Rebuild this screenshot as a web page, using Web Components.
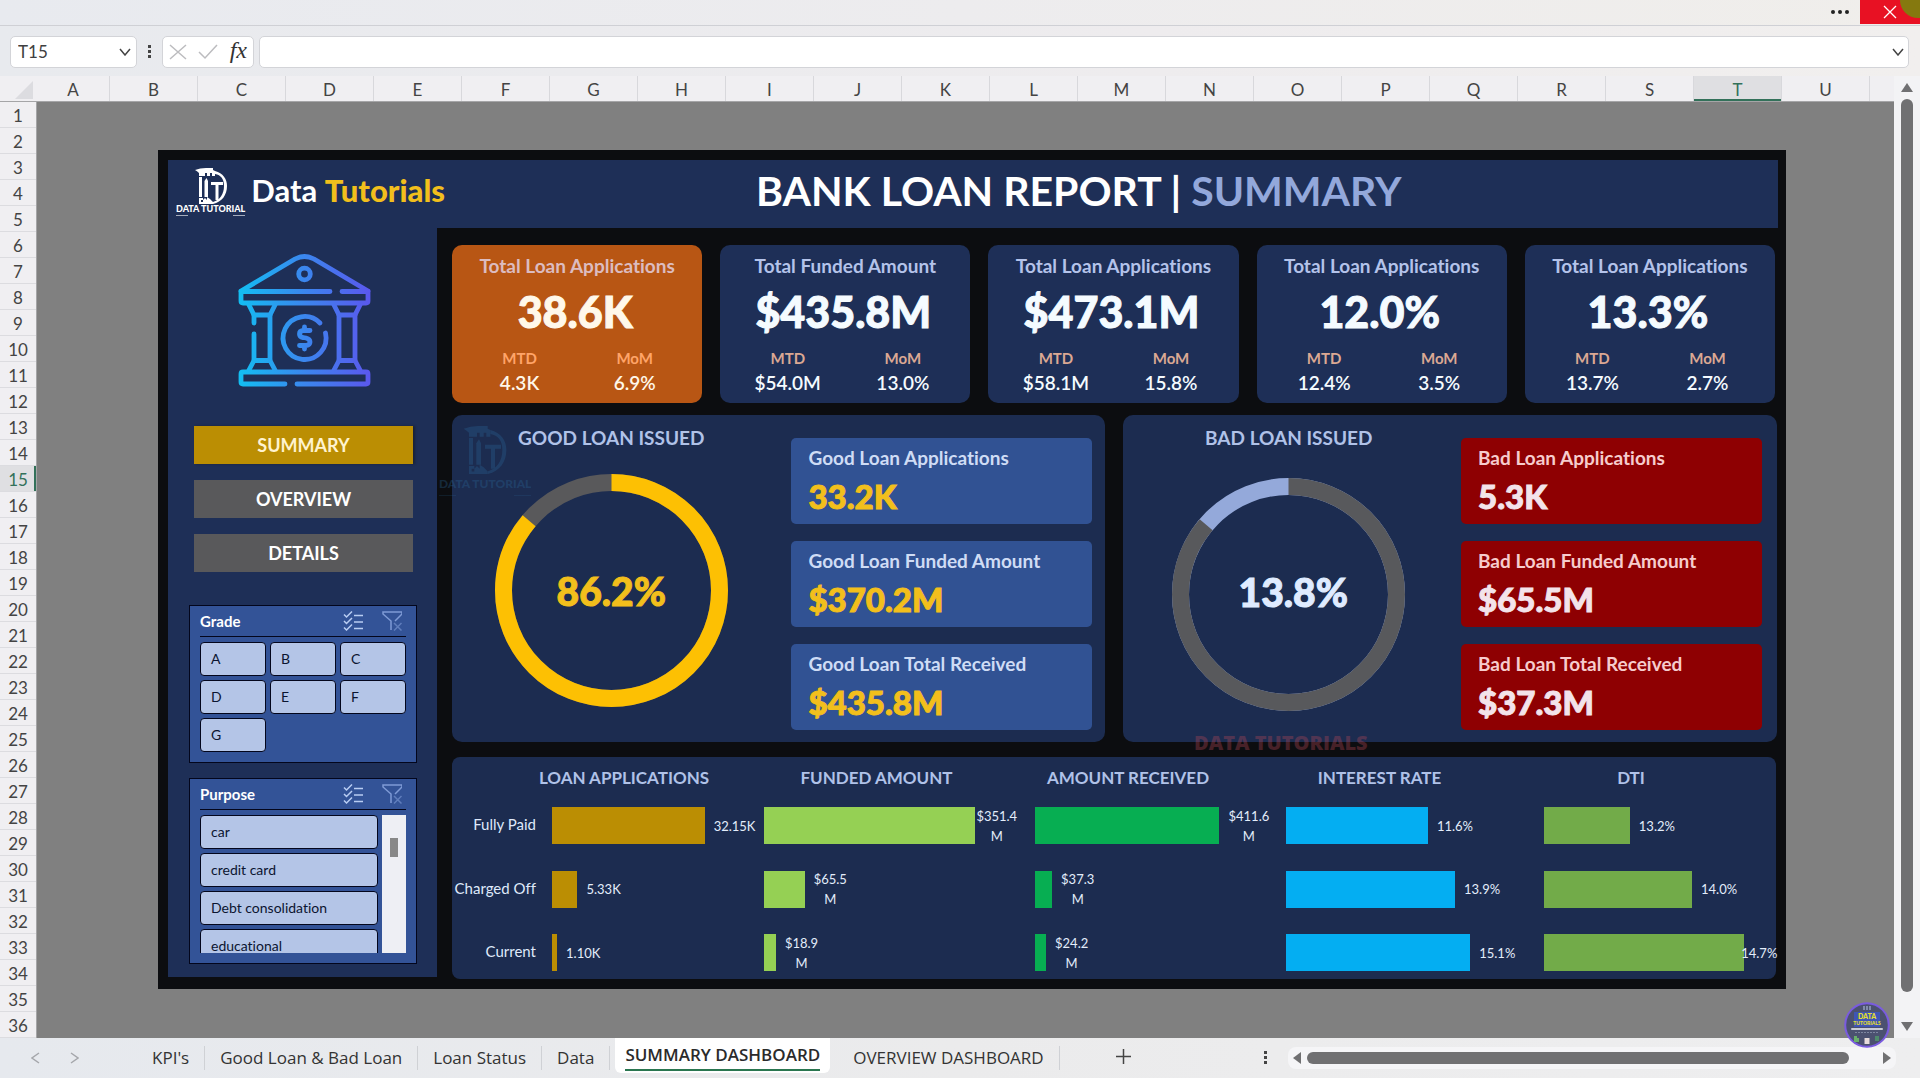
<!DOCTYPE html>
<html lang="en">
<head>
<meta charset="utf-8">
<title>Bank Loan Report</title>
<style>
  html, body { margin: 0; height: 100%; }
  body { font-family: Lato, "Open Sans", sans-serif; font-variant-ligatures: none; background: #fff; overflow: hidden; }
</style>
</head>
<body>
<workbook-window></workbook-window>
<script>
const RESET = `
  *, *::before, *::after { box-sizing: border-box; }
  button, input { font: inherit; color: inherit; border: 0; padding: 0; margin: 0; background: none; outline: none; }
  button { cursor: pointer; }
  svg { display: block; }
  h1, h2, p, ul { margin: 0; padding: 0; font: inherit; list-style: none; }
`;
function define(name, css, html) {
  customElements.define(name, class extends HTMLElement {
    constructor() {
      super();
      this.attachShadow({ mode: 'open' });
    }
    connectedCallback() {
      const body = typeof html === 'function' ? html(this) : html;
      this.shadowRoot.innerHTML = `<style>${RESET}${css}</style>${body}`;
    }
  });
}

/* ---------- brand ---------- */
define('brand-mark', `
  :host { display: flex; flex-direction: column; align-items: center; }
  svg { width: var(--mark-width, 32px); height: var(--mark-height, 36px); }
  span { font-size: var(--mark-font, 9px); line-height: var(--mark-line, 10px); font-weight: 900; white-space: nowrap; }
  i { width: 100%; height: 1px; margin-top: 1px; opacity: .6; background: linear-gradient(90deg, currentColor 18%, transparent 18% 82%, currentColor 82%); }
`, `
  <svg viewBox="0 0 32 36" fill="currentColor" aria-hidden="true">
    <path d="M0 2 Q5 0 11 0 H18 V2 L20 3 V8 H17 V5 H15 V8 H12 V5 H10 V8 H4 V5 Q2 3 0 2 Z"/>
    <path d="M4 9 H7 V29 H4 Z"/>
    <path d="M9.500 13 L11.500 10 L13 13 V29 H9.500 Z"/>
    <path d="M16 14 H28 V17 H23.500 V32 H20.500 V17 H16 Z"/>
    <path d="M20 3 C28 5 32 11 32 18 C32 27 27 34 18 36 V34 C25 32 29 26 29 18 C29 11 26 7 20 6 Z"/>
    <path d="M4 30 H8 V32 L10 30 L12 32 V29 L15 31 L18 34 V36 H4 Z M6 32 V34 H8 V32 Z" fill-rule="evenodd"/>
  </svg>
  <span>DATA TUTORIAL</span><i></i>
`);

define('bank-icon', `
  :host { display: block; width: 133px; height: 133px; }
  svg { width: 100%; height: 100%; }
`, `
  <svg viewBox="0 0 133 133" fill="none" stroke="url(#bank)" stroke-width="4.800" stroke-linecap="round" stroke-linejoin="round" aria-hidden="true">
    <defs><linearGradient id="bank" gradientUnits="userSpaceOnUse" x1="0" y1="66" x2="133" y2="66">
      <stop offset="0" stop-color="#12bff2"/><stop offset=".5" stop-color="#3b86ee"/><stop offset="1" stop-color="#5b57ee"/>
    </linearGradient></defs>
    <path d="M3 37 L57 5 Q66.500 0 76 5 L130 37"/>
    <circle cx="66.500" cy="20" r="5.800"/>
    <path d="M92 37.500 H3 V47 Q3 49 5 49 H128 Q130 49 130 47 V37.500 H104"/>
    <path d="M11 51 L16 61 H32 L37 51 M96 51 L101 61 H117 L122 51"/>
    <path d="M16 61 V69 M16 80 V106 M32 61 V106 M101 61 V106 M117 61 V106"/>
    <path d="M11 116 L16 106.500 H32 L37 116 M96 116 L101 106.500 H117 L122 116"/>
    <path d="M47 130 H5 Q3 130 3 128 V120 Q3 118 5 118 H128 Q130 118 130 120 V128 Q130 130 128 130 H59"/>
    <path d="M82 69 A21.500 21.500 0 1 0 87.500 79"/>
    <path d="M72 76.500 H65 Q61.500 77 61.500 80 Q61.500 83 65 83.500 L68 84 Q72 85 72 88 Q72 91 68 91.500 H61.500 M66.500 73 V76 M66.500 92 V95"/>
  </svg>
`);

/* ---------- dashboard parts ---------- */
define('nav-button', `
  :host { display: block; }
  button { display: block; width: 100%; height: 38px; background: #59595b; color: #fff; font-size: 18px; font-weight: 700; line-height: 38px; }
  :host([current]) button { background: #bb8e03; color: #fff3cf; box-shadow: 2px 0 2px #1a2337; }
`, `<button type="button"><slot></slot></button>`);

define('slicer-box', `
  :host { display: block; border: 1px solid #03061c; background: #335397; padding: 0 10px 10px; }
  header { display: flex; align-items: center; height: 31px; border-bottom: 1px solid #03061c; margin-bottom: 5px; color: #fff; }
  h2 { flex: 1; font-size: 15px; font-weight: 700; line-height: 20px; }
  header button { width: 20px; height: 20px; margin-right: 4px; color: #b9cdf3; }
  header button + button { margin-left: 15px; color: #7f9bd6; }
`, `
  <header>
    <h2><slot name="title"></slot></h2>
    <button type="button" aria-label="Multi-select"><svg viewBox="0 0 20 20" width="20" height="20" fill="none" stroke="currentColor" stroke-width="1.500"><path d="M1 3.500 L3.500 6 L9 .5 M1 10 L3.500 12.500 L9 7 M1 16.500 L3.500 19 L9 13.500 M11 4.500 H20 M11 11 H20 M11 17.500 H20"/></svg></button>
    <button type="button" aria-label="Clear filter"><svg viewBox="0 0 20 20" width="20" height="20" fill="none" stroke="currentColor" stroke-width="1.500"><path d="M9 19 V10 L1 3 V1 H20 V3 L13 10"/><path d="M12 12 L19.500 19.500 M19.500 12 L12 19.500" opacity=".6"/></svg></button>
  </header>
  <slot></slot>
`);

define('slicer-item', `
  :host { display: block; flex: none; }
  button { display: block; width: 100%; height: 34px; padding: 0 10px; text-align: left; font-size: 14px; line-height: 32px; color: #0b1430; background: #b4c5e7; border: 1px solid #03061c; border-radius: 4px; white-space: nowrap; }
`, `<button type="button"><slot></slot></button>`);

define('report-sidebar', `
  :host { display: flex; flex-direction: column; width: 269px; background: #1e2f57; padding: 26px 20px 12px 21px; margin-bottom: 2px; }
  bank-icon { margin: 0 auto 39px 49px; }
  nav { display: flex; flex-direction: column; gap: 16px; margin: 0 4px 33px 5px; }
  .grades { display: grid; grid-template-columns: repeat(3, 1fr); gap: 4px; }
  slicer-box + slicer-box { margin-top: 15px; }
  .purposes { display: flex; gap: 4px; height: 138px; }
  .list { flex: 1; display: flex; flex-direction: column; gap: 4px; overflow: hidden; }
  .track { width: 24px; background: #eeeff4; padding: 23px 8px; }
  .thumb { height: 19px; background: #888; }
`, `
  <bank-icon></bank-icon>
  <nav><nav-button current>SUMMARY</nav-button><nav-button>OVERVIEW</nav-button><nav-button>DETAILS</nav-button></nav>
  <slicer-box><span slot="title">Grade</span>
    <div class="grades">${[...'ABCDEFG'].map(g => `<slicer-item>${g}</slicer-item>`).join('')}</div>
  </slicer-box>
  <slicer-box><span slot="title">Purpose</span>
    <div class="purposes">
      <div class="list">${['car', 'credit card', 'Debt consolidation', 'educational'].map(p => `<slicer-item>${p}</slicer-item>`).join('')}</div>
      <div class="track"><div class="thumb"></div></div>
    </div>
  </slicer-box>
`);

define('report-header', `
  :host { display: flex; align-items: center; height: 68px; background: #1e2f57; color: #fff; }
  .brand { display: flex; align-items: center; gap: 6px; width: 588px; padding: 0 0 4px 8px; }
  .name { font-size: 31px; line-height: 36px; font-weight: 700; padding-bottom: 4px; }
  .name b { color: #f2bf1c; }
  h1 { font-size: 41px; line-height: 50px; font-weight: 700; padding-bottom: 6px; white-space: nowrap; }
  h1 span { color: #93a8db; }
`, `
  <div class="brand"><brand-mark></brand-mark><div class="name">Data <b>Tutorials</b></div></div>
  <h1>BANK LOAN REPORT | <span>SUMMARY</span></h1>
`);

define('kpi-card', `
  :host { display: block; flex: 1 1 0; min-width: 0; height: 158px; border-radius: 10px; background: #1e2f57; padding: 9px 10px 8px; text-align: center; color: #f5fbff; }
  :host([highlight]) { background: #b85614; color: #fff8ea; }
  h2 { font-size: 19px; line-height: 24px; font-weight: 700; color: #b4c3ea; white-space: nowrap; }
  :host([highlight]) h2 { color: #dcbcc0; }
  .value { font-size: 43px; line-height: 48px; font-weight: 900; margin: 10px 4px 12px 0; -webkit-text-stroke: 1px currentColor; }
  .pair { display: grid; grid-template-columns: 1fr 1fr; row-gap: 3px; }
  .cap { font-size: 15px; line-height: 20px; font-weight: 700; color: #dba893; }
  :host([highlight]) .cap { color: #ffa468; }
  .num { font-size: 19px; line-height: 24px; font-weight: 600; }
`, el => `
  <h2>${el.dataset.title}</h2>
  <div class="value">${el.dataset.value}</div>
  <div class="pair"><span class="cap">MTD</span><span class="cap">MoM</span><span class="num">${el.dataset.mtd}</span><span class="num">${el.dataset.mom}</span></div>
`);

define('donut-chart', `
  :host { display: grid; place-items: center; width: 233px; height: 233px; }
  svg, span { grid-area: 1 / 1; }
  svg { width: 100%; height: 100%; }
  span { font-size: 39px; line-height: 48px; font-weight: 900; color: var(--ink); padding: var(--label-inset, 0); -webkit-text-stroke: 1px currentColor; }
`, el => {
  const first = el.dataset.first;
  return `<svg viewBox="0 0 233 233" fill="none" stroke-width="17" aria-hidden="true">
    <circle cx="116.500" cy="116.500" r="108" stroke="var(--rest)"/>
    <circle cx="116.500" cy="116.500" r="108" stroke="var(--main)" pathLength="100" stroke-dasharray="${first} 100" transform="rotate(-90 116.500 116.500)"/>
  </svg><span><slot></slot></span>`;
});

define('stat-card', `
  :host { display: block; height: 86px; border-radius: 5px; background: var(--stat-bg); padding: 9px 16px 9px 17px; white-space: nowrap; }
  p { font-size: 19px; line-height: 22px; font-weight: 700; color: var(--stat-label); }
  div { font-size: 33px; line-height: 36px; font-weight: 900; margin-top: 9px; color: var(--stat-value); -webkit-text-stroke: 1px currentColor; }
`, el => `<p>${el.dataset.label}</p><div>${el.dataset.value}</div>`);

define('loan-panel', `
  :host { display: flex; flex: 1 1 0; min-width: 0; border-radius: 10px; background: #1c2c50; padding: 23px var(--panel-pad, 13px) 12px 0; }
  .visual { flex: 1; display: flex; flex-direction: column; align-items: center; padding-right: var(--visual-pad, 21px); margin-top: -12px; }
  h2 { font-size: 19px; line-height: 24px; font-weight: 700; color: #b0c2e8; margin-bottom: var(--title-gap, 24px); }
  .stats { display: flex; flex-direction: column; gap: 17px; width: 301px; }
`, `
  <section class="visual"><h2><slot name="title"></slot></h2><slot name="donut"></slot></section>
  <div class="stats"><slot></slot></div>
`);

define('bar-chart', `
  :host { display: flex; flex-direction: column; min-width: 0; color: #e3edfb; }
  h2 { width: var(--title-width); line-height: 24px; font-size: 17px; font-weight: 700; text-align: center; white-space: nowrap; color: #b0c2e8; align-self: flex-start; display: flex; justify-content: center; }
  ul { display: flex; flex-direction: column; justify-content: space-between; height: 164px; margin-top: 17px; }
  li { display: flex; align-items: center; height: 37px; }
  i { flex: none; height: 37px; background: var(--bar); }
  span { font-size: 13px; line-height: 20px; text-align: center; margin-left: 9px; white-space: nowrap; }
  .tight { margin-left: 1px; }
  .over { margin-left: -3px; }
`, el => `
  <h2>${el.dataset.title}</h2>
  <ul>${el.dataset.bars.split(';').map(row => {
    const [width, label, mode = ''] = row.split(',');
    return `<li><i style="width:${width}%"></i><span class="${mode}">${label.replace('|', '<br>')}</span></li>`;
  }).join('')}</ul>
`);

define('status-panel', `
  :host { display: grid; grid-template-columns: 100fr 212fr 271fr 251fr 258fr 232fr; height: 222px; border-radius: 8px; background: #1c2c50; padding-top: 9px; }
  .rows { display: flex; flex-direction: column; justify-content: space-between; height: 164px; margin-top: 41px; padding-right: 16px; color: #dfe9fa; }
  .rows li { font-size: 15px; line-height: 34px; height: 37px; display: flex; justify-content: flex-end; white-space: nowrap; }
`, `
  <ul class="rows"><li>Fully Paid</li><li>Charged Off</li><li>Current</li></ul>
  <bar-chart style="--bar:#bb8e03;--title-width:144px" data-title="LOAN APPLICATIONS" data-bars="72,32.15K;12,5.33K;2.400,1.10K"></bar-chart>
  <bar-chart style="--bar:#95d054;--title-width:225px" data-title="FUNDED AMOUNT" data-bars="78,$351.4|M,tight;15,$65.5|M;4.400,$18.9|M"></bar-chart>
  <bar-chart style="--bar:#07ae52;--title-width:186px" data-title="AMOUNT RECEIVED" data-bars="73.500,$411.6|M;6.800,$37.3|M;4.400,$24.2|M"></bar-chart>
  <bar-chart style="--bar:#04aef2;--title-width:187px" data-title="INTEREST RATE" data-bars="55,11.6%;65.500,13.9%;71.400,15.1%"></bar-chart>
  <bar-chart style="--bar:#72ab49;--title-width:174px" data-title="DTI" data-bars="37,13.2%;63.800,14.0%;86.300,14.7%,over"></bar-chart>
`);

define('loan-report', `
  :host { display: block; position: relative; background: #0c0d10; padding: 10px 8px 10px 10px; }
  .body { display: flex; }
  .content { flex: 1; min-width: 0; display: flex; flex-direction: column; padding: 17px 1px 0 15px; }
  .kpis { display: flex; gap: 18px; margin-bottom: 12px; padding-right: 2px; }
  .panels { display: flex; gap: 18px; margin-bottom: 15px; height: 327px; }
  status-panel { margin-right: 1px; }
  .good { --stat-bg: #315293; --stat-label: #cfdcf5; --stat-value: #f2bf1c; --main: #fdc003; --rest: #59595b; --ink: #f2bf1c; flex-grow: 1.003; }
  .bad { --stat-bg: #8e0002; --stat-label: #f6cccd; --stat-value: #f3e3ea; --main: #58595c; --rest: #94a9da; --ink: #dfebff; --visual-pad: 7px; --title-gap: 28px; --label-inset: 0 0 6px 9px; --panel-pad: 15px; }
  .ghost { position: absolute; color: #2c6a9c; opacity: .3; pointer-events: none; }
  .ghost.logo { left: 281px; top: 276px; height: 70px; overflow: hidden; --mark-width: 46px; --mark-height: 50px; --mark-font: 12px; --mark-line: 20px; }
  .ghost.text { left: 1036px; bottom: 234px; color: #b84858; opacity: .34; font-size: 20px; line-height: 24px; font-weight: 800; font-family: "Open Sans", sans-serif; }
`, `
  <report-header></report-header>
  <div class="body">
    <report-sidebar></report-sidebar>
    <div class="content">
      <div class="kpis">
        <kpi-card highlight data-title="Total Loan Applications" data-value="38.6K" data-mtd="4.3K" data-mom="6.9%"></kpi-card>
        <kpi-card data-title="Total Funded Amount" data-value="$435.8M" data-mtd="$54.0M" data-mom="13.0%"></kpi-card>
        <kpi-card data-title="Total Loan Applications" data-value="$473.1M" data-mtd="$58.1M" data-mom="15.8%"></kpi-card>
        <kpi-card data-title="Total Loan Applications" data-value="12.0%" data-mtd="12.4%" data-mom="3.5%"></kpi-card>
        <kpi-card data-title="Total Loan Applications" data-value="13.3%" data-mtd="13.7%" data-mom="2.7%"></kpi-card>
      </div>
      <div class="panels">
        <loan-panel class="good"><span slot="title">GOOD LOAN ISSUED</span>
          <donut-chart slot="donut" data-first="86.200">86.2%</donut-chart>
          <stat-card data-label="Good Loan Applications" data-value="33.2K"></stat-card>
          <stat-card data-label="Good Loan Funded Amount" data-value="$370.2M"></stat-card>
          <stat-card data-label="Good Loan Total Received" data-value="$435.8M"></stat-card>
        </loan-panel>
        <loan-panel class="bad"><span slot="title">BAD LOAN ISSUED</span>
          <donut-chart slot="donut" data-first="86.200">13.8%</donut-chart>
          <stat-card data-label="Bad Loan Applications" data-value="5.3K"></stat-card>
          <stat-card data-label="Bad Loan Funded Amount" data-value="$65.5M"></stat-card>
          <stat-card data-label="Bad Loan Total Received" data-value="$37.3M"></stat-card>
        </loan-panel>
      </div>
      <status-panel></status-panel>
    </div>
  </div>
  <brand-mark class="ghost logo"></brand-mark>
  <div class="ghost text">DATA TUTORIALS</div>
`);

/* ---------- spreadsheet chrome ---------- */
define('title-strip', `
  :host { display: flex; justify-content: flex-end; height: 26px; border-bottom: 1px solid #cfd0d5; background: linear-gradient(90deg, #e8eaef, #edecee 50%, #f0eeeb); }
  .more { width: 40px; height: 24px; display: grid; place-items: center; }
  .close { position: relative; width: 60px; height: 24px; background: #e81123; color: #fff; overflow: hidden; display: grid; place-items: center; }
  .close::after { content: ""; position: absolute; right: -16px; top: -18px; width: 36px; height: 36px; border-radius: 50%; background: #85790f; }
`, `
  <button class="more" type="button" aria-label="More"><svg width="20" height="6" fill="#222"><circle cx="3" cy="3" r="2"/><circle cx="10" cy="3" r="2"/><circle cx="17" cy="3" r="2"/></svg></button>
  <button class="close" type="button" aria-label="Close"><svg width="14" height="14" stroke="#fff" stroke-width="1.300"><path d="M1 1 L13 13 M13 1 L1 13"/></svg></button>
`);

define('formula-bar', `
  :host { display: flex; align-items: center; height: 50px; padding: 0 11px 8px 10px; background: linear-gradient(90deg, #e8eaee, #eeecee 60%, #f1efee); color: #444; }
  .box { display: flex; align-items: center; height: 32px; background: #fff; border: 1px solid #d3d4d8; border-radius: 5px; margin-top: 10px; }
  .name { width: 127px; padding: 0 5px 0 7px; justify-content: space-between; }
  .name input { width: 90px; font-size: 17px; line-height: 24px; color: #404040; }
  .dots { width: 25px; margin-top: 10px; display: grid; place-items: center; }
  .tools { width: 92px; padding: 0 6px; justify-content: space-between; margin-right: 5px; }
  .fx { font: italic 400 24px/26px "Liberation Serif", serif; color: #333; padding-bottom: 4px; }
  .entry { flex: 1; padding: 0 4px 0 8px; }
  .entry input { flex: 1; min-width: 0; font-size: 17px; }
`, `
  <div class="box name"><input aria-label="Name box" value="T15"><button type="button" aria-label="Choose name"><svg width="12" height="8" fill="none" stroke="#444" stroke-width="1.500"><path d="M1 1 L6 7 L11 1"/></svg></button></div>
  <div class="dots"><svg width="4" height="14" fill="#444"><path d="M0 0h3v3H0z M0 5h3v3H0z M0 10h3v3H0z"/></svg></div>
  <div class="box tools">
    <button type="button" aria-label="Cancel"><svg width="18" height="16" fill="none" stroke="#bcbcbf" stroke-width="1.500"><path d="M1 1 L17 15 M17 1 L1 15"/></svg></button>
    <button type="button" aria-label="Enter"><svg width="20" height="16" fill="none" stroke="#bcbcbf" stroke-width="1.500"><path d="M1 8 L7 14 L19 1"/></svg></button>
    <button class="fx" type="button">fx</button>
  </div>
  <div class="box entry"><input aria-label="Formula"><button type="button" aria-label="Expand formula bar"><svg width="12" height="8" fill="none" stroke="#444" stroke-width="1.500"><path d="M1 1 L6 7 L11 1"/></svg></button></div>
`);

define('column-heads', `
  :host { display: flex; height: 26px; background: #f0eff2; border-bottom: 1px solid #a5a5a7; color: #444; font-size: 17px; overflow: hidden; }
  .corner { flex: none; width: 37px; padding: 5px 4px 0 15px; }
  span { flex: none; width: 88px; line-height: 28px; text-align: center; border-right: 1px solid #d8d8dc; }
  .first { width: 73px; }
  .on { background: #dfdfe2; color: #33715a; box-shadow: inset 0 -2px #33715a; }
`, `
  <div class="corner"><svg width="18" height="18" fill="#dcdce0"><path d="M18 0 V18 H0 Z"/></svg></div>
  ${[...'ABCDEFGHIJKLMNOPQRSTU'].map(c => `<span class="${c === 'A' ? 'first' : c === 'T' ? 'on' : ''}">${c}</span>`).join('')}
`);

define('row-heads', `
  :host { display: block; flex: none; width: 37px; background: #f0eff2; border-right: 1px solid #a5a5a7; color: #444; font-size: 17px; overflow: hidden; }
  span { display: block; height: 26px; line-height: 28px; text-align: center; border-bottom: 1px solid #dcdce0; }
  .on { background: #dfdfe2; color: #33715a; box-shadow: inset -2px 0 #33715a; }
`, Array.from({ length: 36 }, (_, i) => `<span class="${i === 14 ? 'on' : ''}">${i + 1}</span>`).join(''));

define('scroll-rail', `
  :host { display: flex; align-items: center; }
  :host([axis="y"]) { flex-direction: column; width: 26px; background: #f3f3f5; padding: 7px 0 2px; }
  :host([axis="x"]) { height: 22px; width: 608px; background: #f5f5f7; border-radius: 8px; padding: 0 5px; }
  .thumb { background: #707072; border-radius: 6px; }
  :host([axis="y"]) .thumb { width: 12px; flex: 1; margin: 6px 0 30px; }
  :host([axis="x"]) .thumb { height: 12px; flex: 1; margin: 0 34px 0 6px; }
  svg { fill: #707072; }
`, el => el.getAttribute('axis') === 'y'
  ? `<svg width="12" height="10"><path d="M6 0 L12 9 H0 Z"/></svg><div class="thumb"></div><svg width="12" height="14"><path d="M6 9 L12 0 H0 Z"/></svg>`
  : `<svg width="8" height="12"><path d="M0 6 L8 0 V12 Z"/></svg><div class="thumb"></div><svg width="8" height="12"><path d="M8 6 L0 0 V12 Z"/></svg>`);

define('sheet-tabs', `
  :host { display: flex; align-items: flex-start; height: 42px; background: linear-gradient(90deg, #e6e9ee, #ebebec 50%, #eeeeef); border-bottom: 2px solid #fff; color: #333; font: 17px/24px "Open Sans", sans-serif; }
  .arrows { display: flex; gap: 30px; width: 137px; padding: 14px 0 0 31px; }
  .tab { height: 24px; margin-top: 8px; padding: 0 15px; border-right: 1px solid #cfd1d5; white-space: nowrap; }
  .current { height: 35px; margin: 0 8px 0 5px; padding: 3px 10px 0; background: #fff; border: 0; border-radius: 0 0 6px 6px; font-weight: 600; color: #2b2b2b; }
  .current span { display: block; height: 28px; line-height: 24px; border-bottom: 2px solid #2a7650; }
  .add { margin: 11px 0 0 56px; }
  .spacer { flex: 1; }
  .dots { margin: 13px 20px 0 0; }
  scroll-rail { margin: 9px 24px 0 0; }
`, `
  <div class="arrows">
    <button type="button" aria-label="Previous sheet"><svg width="9" height="12" fill="none" stroke="#a5a7ab" stroke-width="1.500"><path d="M8 1 L1 6 L8 11"/></svg></button>
    <button type="button" aria-label="Next sheet"><svg width="9" height="12" fill="none" stroke="#a5a7ab" stroke-width="1.500"><path d="M1 1 L8 6 L1 11"/></svg></button>
  </div>
  <button class="tab" type="button">KPI's</button>
  <button class="tab" type="button">Good Loan &amp; Bad Loan</button>
  <button class="tab" type="button">Loan Status</button>
  <button class="tab" type="button">Data</button>
  <button class="tab current" type="button"><span>SUMMARY DASHBOARD</span></button>
  <button class="tab" type="button">OVERVIEW DASHBOARD</button>
  <button class="add" type="button" aria-label="New sheet"><svg width="15" height="15" stroke="#444" stroke-width="1.500"><path d="M7.500 0 V15 M0 7.500 H15"/></svg></button>
  <div class="spacer"></div>
  <svg class="dots" width="4" height="14" fill="#444"><path d="M0 0h3v3H0z M0 5h3v3H0z M0 10h3v3H0z"/></svg>
  <scroll-rail axis="x"></scroll-rail>
`);

define('channel-badge', `
  :host { display: block; width: 46px; height: 46px; }
  text { font: 900 7px Lato, sans-serif; fill: #e6e02a; text-anchor: middle; }
`, `
  <svg viewBox="0 0 46 46" width="46" height="46">
    <circle cx="23" cy="23" r="21.800" fill="#4b5170" stroke="#7a5be0" stroke-width="2"/>
    <path d="M20 4 V8 M23 4 V8 M26 4 V8" stroke="#b8c8e8"/>
    <rect x="10" y="10" width="26" height="15" fill="#3f55b5"/>
    <text x="23" y="17">DATA</text><text x="23" y="23" style="font-size:5px">TUTORIALS</text>
    <rect x="7" y="26" width="32" height="2" rx="1" fill="#c9ccd6"/>
    <path d="M11 30.500 H35" stroke="#7d86a0" stroke-dasharray="2 1"/>
    <path d="M10 34 h3 v2 h2 v4 h-5 z" fill="#69b06a"/><rect x="20.500" y="36" width="5" height="6" fill="#e7dcdc"/><path d="M31 34 h4 v5 h-4 z" fill="#4f8a6c"/>
  </svg>
`);

define('workbook-window', `
  :host { display: flex; flex-direction: column; height: 100vh; position: relative; }
  .sheet { flex: 1; min-height: 0; display: flex; }
  .grid { flex: 1; min-width: 0; display: flex; flex-direction: column; }
  .rows { flex: 1; min-height: 0; display: flex; }
  .canvas { flex: 1; min-width: 0; background: #808080; padding: 48px 108px 0 121px; }
  channel-badge { position: absolute; right: 30px; bottom: 32px; }
`, `
  <title-strip></title-strip>
  <formula-bar></formula-bar>
  <div class="sheet">
    <div class="grid">
      <column-heads></column-heads>
      <div class="rows"><row-heads></row-heads><div class="canvas"><loan-report></loan-report></div></div>
    </div>
    <scroll-rail axis="y"></scroll-rail>
  </div>
  <sheet-tabs></sheet-tabs>
  <channel-badge></channel-badge>
`);
</script>
</body>
</html>
